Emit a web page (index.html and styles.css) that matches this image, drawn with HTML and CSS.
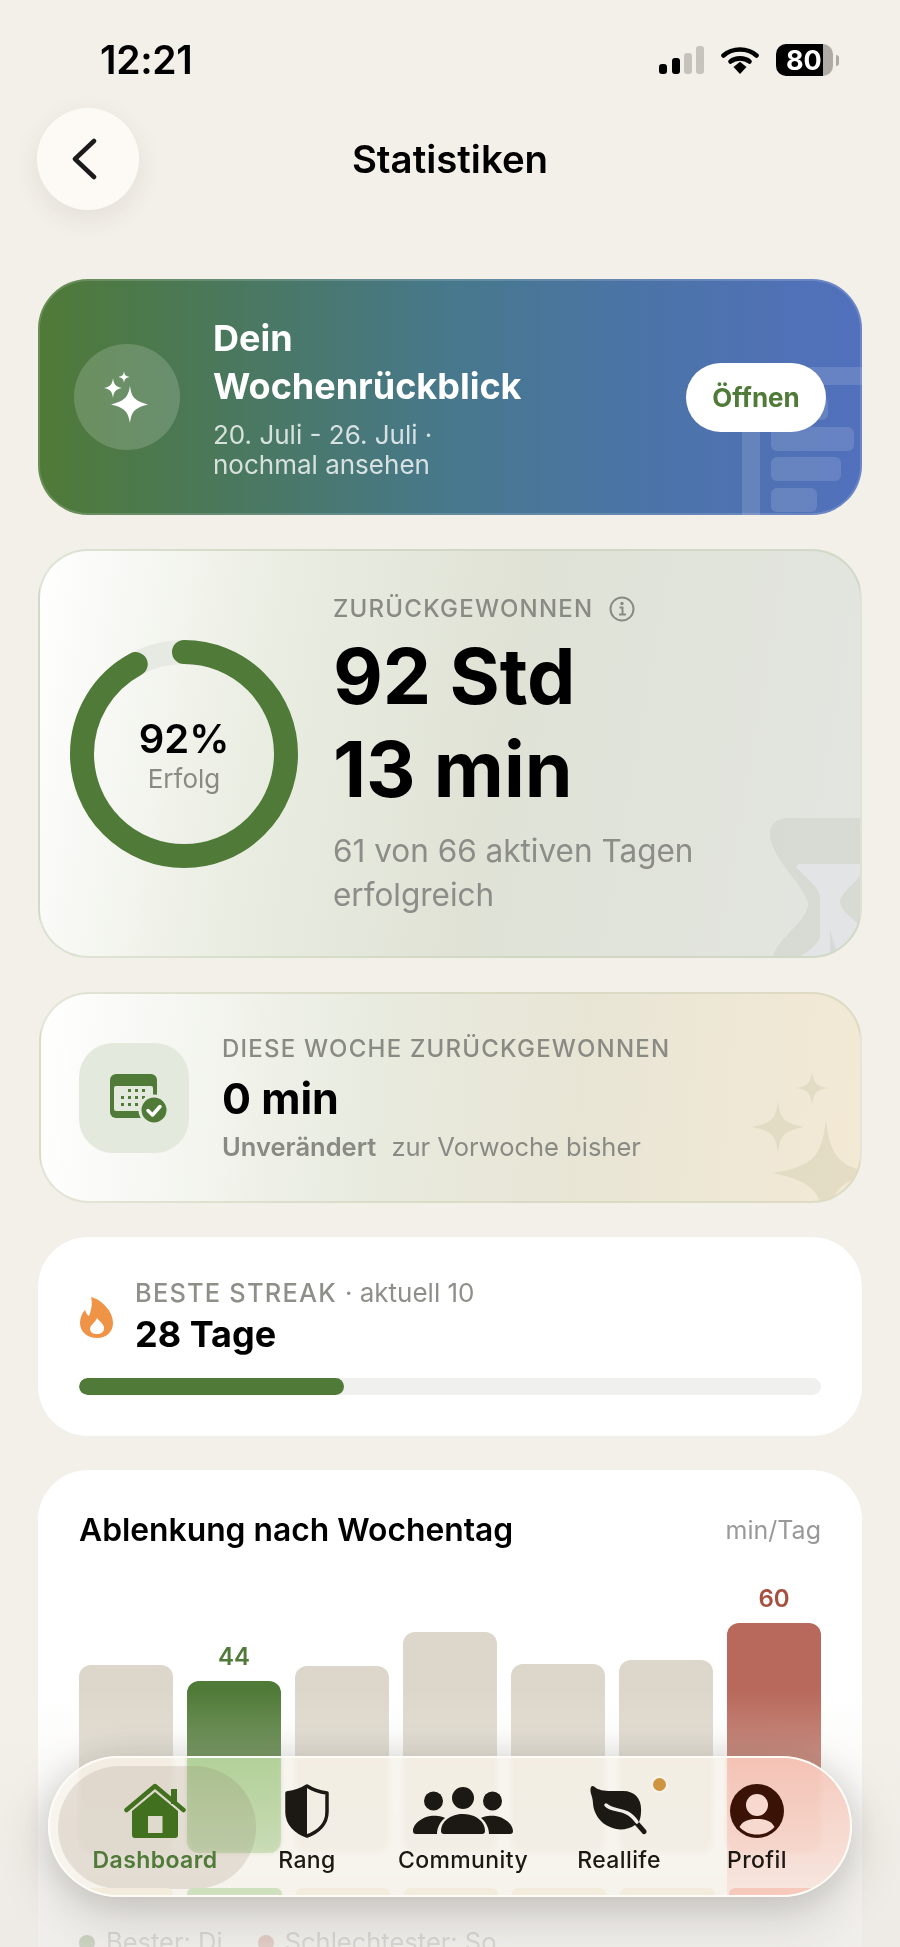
FILE: index.html
```html
<!DOCTYPE html>
<html lang="de">
<head>
    <meta charset="UTF-8">
    <meta name="viewport" content="width=device-width, initial-scale=1.0">
    <title>Statistiken</title>
    <link rel="stylesheet" href="styles.css">
</head>
<body>
  <div class="status-bar">
    <span class="time">12:21</span>
    <div class="status-icons">
      <svg class="signal" width="45" height="28" viewBox="0 0 45 28">
        <rect x="0" y="18" width="8" height="10" rx="3" fill="#000"/>
        <rect x="13" y="12" width="8" height="16" rx="3" fill="#000"/>
        <rect x="25" y="7" width="8" height="21" rx="3" fill="#c6c3bd"/>
        <rect x="37" y="0" width="8" height="28" rx="3" fill="#c6c3bd"/>
      </svg>
      <svg class="wifi" width="38" height="28" viewBox="0 0 38 28">
        <path d="M2.5 9.5C11.5 1.5 26.5 1.5 35.5 9.5" fill="none" stroke="#000" stroke-width="4.6" stroke-linecap="round"/>
        <path d="M9.5 15.5C14.5 11.3 23.5 11.3 28.5 15.5" fill="none" stroke="#000" stroke-width="4.6" stroke-linecap="round"/>
        <path d="M12.5 21L19 15.8L25.5 21L19 28z" fill="#000"/>
      </svg>
      <div class="battery">
        <div class="battery-body"><span class="battery-level">80</span></div>
        <div class="battery-nub"></div>
      </div>
    </div>
  </div>

  <header class="top-bar">
    <button class="back-btn" aria-label="Zurück">
      <svg width="28" height="42" viewBox="0 0 28 42"><path d="M24 3L5 21L24 39" fill="none" stroke="#1b1b1b" stroke-width="4.5" stroke-linecap="round" stroke-linejoin="round"/></svg>
    </button>
    <h1>Statistiken</h1>
  </header>

  <main class="cards">
    <section class="card review-card">
      <svg class="review-deco" width="120" height="148" viewBox="0 0 120 148">
        <g fill="#fff" fill-opacity=".13">
          <rect x="0" y="0" width="120" height="18" rx="2"/>
          <rect x="0" y="18" width="18" height="130"/>
          <rect x="29" y="30" width="57" height="23" rx="6"/>
          <rect x="29" y="60" width="83" height="24" rx="6"/>
          <rect x="29" y="90" width="70" height="24" rx="6"/>
          <rect x="29" y="121" width="46" height="24" rx="6"/>
        </g>
      </svg>
      <div class="review-icon">
        <svg width="62" height="62" viewBox="0 0 62 62">
          <path fill="#fff" d="M38 20C39.5 31 42 34.5 56 38.5C42 42 39.5 46 38 57C36 46 33.5 42 19 38.5C33.5 34.5 36 31 38 20z"/>
          <path fill="#fff" d="M21 12C22 19 23.5 20.5 30 22C23.5 23.5 22 25 21 32C20 25 18.5 23.5 12 22C18.5 20.5 20 19 21 12z"/>
          <path fill="#fff" d="M32 5C32.5 9 33.5 10 37.5 11C33.5 12 32.5 13 32 17C31.5 13 30.5 12 26.5 11C30.5 10 31.5 9 32 5z"/>
        </svg>
      </div>
      <div class="review-text">
        <h2>Dein<br>Wochenrückblick</h2>
        <p>20. Juli - 26. Juli ·<br>nochmal ansehen</p>
      </div>
      <button class="open-btn">Öffnen</button>
    </section>

    <section class="card saved-card">
      <svg class="hourglass-deco" width="90" height="138" viewBox="0 0 90 138">
        <path fill="#8b9a85" fill-opacity=".13" d="M18 0H90V138H3C10 118 34 106 38 88C40 74 6 46 0 20C-2 8 6 0 18 0z"/>
        <path fill="#e3e4e5" d="M30 46C27 46 26 48 27 50C36 60 48 68 50 78V120C46 128 38 133 31 138H90V108C82 100 70 92 70 84C70 76 84 66 90 58V46z"/>
        <path fill="#8b9a85" fill-opacity=".13" d="M60 112L68 138H60z"/>
      </svg>
      <div class="ring">
        <svg width="228" height="228" viewBox="0 0 228 228">
          <circle cx="114" cy="114" r="102" fill="none" stroke="#e7e9e3" stroke-width="24"/>
          <circle cx="114" cy="114" r="102" fill="none" stroke="#4f7a37" stroke-width="24" stroke-linecap="round" stroke-dasharray="589.6 640.9" transform="rotate(-90 114 114)"/>
        </svg>
        <div class="ring-text">
          <strong>92%</strong>
          <span>Erfolg</span>
        </div>
      </div>
      <div class="saved-text">
        <div class="label">ZURÜCKGEWONNEN
          <svg width="26" height="26" viewBox="0 0 26 26"><circle cx="13" cy="13" r="11.5" fill="none" stroke="#8a8a85" stroke-width="2"/><circle cx="13" cy="7.5" r="1.7" fill="#8a8a85"/><path d="M10.5 11.5H13.5V18.5M10 18.5H17" fill="none" stroke="#8a8a85" stroke-width="2"/></svg>
        </div>
        <div class="big-value">92 Std<br>13 min</div>
        <p class="saved-sub">61 von 66 aktiven Tagen<br>erfolgreich</p>
      </div>
    </section>

    <section class="card week-card">
      <svg class="stars-deco" width="120" height="130" viewBox="-30 0 120 130">
        <g fill="#9ea36f" fill-opacity=".17">
          <path d="M42 1C44 12 46 15 58 17C46 19 44 22 42 34C40 22 38 19 26 17C38 15 40 12 42 1z"/>
          <path d="M8 30C10 48 14 52 34 56C14 60 10 64 8 82C6 64 2 60 -18 56C2 52 6 48 8 30z"/>
          <path d="M56 49C60 84 68 96 104 102C68 110 60 122 56 157C52 122 44 110 2 102C44 96 52 84 56 49z"/>
        </g>
      </svg>
      <div class="week-icon">
        <svg width="62" height="56" viewBox="0 0 62 56">
          <rect x="0" y="0" width="47" height="44" rx="6" fill="#4f7a37"/>
          <rect x="4" y="12" width="39" height="25" rx="2" fill="#e3e9dc"/>
          <g fill="#4f7a37">
            <rect x="18" y="15" width="3" height="3"/><rect x="25" y="15" width="3" height="3"/><rect x="32" y="15" width="3" height="3"/>
            <rect x="11" y="22" width="3" height="3"/><rect x="18" y="22" width="3" height="3"/><rect x="25" y="22" width="3" height="3"/><rect x="32" y="22" width="3" height="3"/>
            <rect x="11" y="29" width="3" height="3"/><rect x="18" y="29" width="3" height="3"/><rect x="25" y="29" width="3" height="3"/>
          </g>
          <circle cx="44" cy="36" r="14" fill="#4f7a37" stroke="#e3e9dc" stroke-width="3"/>
          <path d="M38 36.5L42.5 41L50 32.5" fill="none" stroke="#fff" stroke-width="3.5" stroke-linecap="round" stroke-linejoin="round"/>
        </svg>
      </div>
      <div class="week-text">
        <div class="label">DIESE WOCHE ZURÜCKGEWONNEN</div>
        <div class="week-value">0 min</div>
        <p class="week-sub"><b>Unverändert</b> zur Vorwoche bisher</p>
      </div>
    </section>

    <section class="card streak-card">
      <div class="streak-top">
        <svg class="flame" width="33" height="41" viewBox="0 0 33 41">
          <path fill="#ef9346" fill-rule="evenodd" d="M11 0C20 2 33 13 33 26C33 35 26 41 17 41C8 41 0 35 0 26C0 21 2 16 5 13C6 16 7 18 9 19C11 14 13 7 11 0zM17 21C15 26 10 28 10 32C10 35 13 37 17 37C21 37 24 35 24 31C24 27 20 25 17 21z"/>
        </svg>
        <div>
          <div class="label streak-label">BESTE STREAK <span>· aktuell 10</span></div>
          <div class="streak-value">28 Tage</div>
        </div>
      </div>
      <div class="progress"><div class="progress-fill" style="width: 35.7%"></div></div>
    </section>

    <section class="card chart-card">
      <div class="chart-head">
        <h3>Ablenkung nach Wochentag</h3>
        <span>min/Tag</span>
      </div>
      <div class="chart">
        <div class="col"><div class="bar" style="height: 188px"></div></div>
        <div class="col"><b class="val best">44</b><div class="bar bar-best" style="height: 172px"></div></div>
        <div class="col"><div class="bar" style="height: 187px"></div></div>
        <div class="col"><div class="bar" style="height: 221px"></div></div>
        <div class="col"><div class="bar" style="height: 189px"></div></div>
        <div class="col"><div class="bar" style="height: 193px"></div></div>
        <div class="col"><b class="val worst">60</b><div class="bar bar-worst" style="height: 230px"></div></div>
      </div>
      <div class="legend">
        <span><i class="dot dot-best"></i>Bester: Di</span>
        <span><i class="dot dot-worst"></i>Schlechtester: So</span>
      </div>
    </section>
  </main>

  <div class="bottom-fade"></div>

  <nav class="tabbar">
    <div class="tab-tint-best"></div>
    <div class="tab-pill"></div>
    <div class="tab-tint"></div>
    <div class="tab-echo">
      <i></i><i class="echo-best"></i><i></i><i></i><i></i><i></i><i class="echo-worst"></i>
    </div>
    <a class="tab tab-home">
      <svg width="62" height="56" viewBox="0 0 62 56">
        <path fill="#41701f" fill-rule="evenodd" d="M31 9L54 28V52Q54 55 51 55H11Q8 55 8 52V28zM24 33V50H38.5V33z"/>
        <rect x="47" y="6" width="6" height="15" fill="#41701f"/>
        <path d="M2.5 27L31 3L59.5 27" fill="none" stroke="#41701f" stroke-width="4.5" stroke-linecap="round" stroke-linejoin="round"/>
      </svg>
      <span>Dashboard</span>
    </a>
    <a class="tab tab-rank">
      <svg width="44" height="54" viewBox="0 0 44 54">
        <path fill="#1c1814" d="M22 2C16 6 9 8 2 9V28C2 40 11 48 22 52z"/>
        <path d="M22 2C28 6 35 8 42 9V28C42 40 33 48 22 52C11 48 2 40 2 28V9C9 8 16 6 22 2z" fill="none" stroke="#1c1814" stroke-width="3.5" stroke-linejoin="round"/>
      </svg>
      <span>Rang</span>
    </a>
    <a class="tab tab-community">
      <svg width="100" height="50" viewBox="0 0 100 50">
        <g fill="#1c1814">
          <circle cx="50" cy="12" r="11"/>
          <circle cx="20.5" cy="15" r="9.5"/>
          <circle cx="79.5" cy="15" r="9.5"/>
          <path d="M28 45C28 35 38 28 50 28C62 28 72 35 72 45Q72 48 69 48H31Q28 48 28 45z"/>
          <path d="M75 30C88 28 100 37 100 45Q100 48 97 48H76C76 41 72 35 68 32C70 31 72 30 75 30z"/>
          <path d="M25 30C12 28 0 37 0 45Q0 48 3 48H24C24 41 28 35 32 32C30 31 28 30 25 30z"/>
        </g>
      </svg>
      <span>Community</span>
    </a>
    <a class="tab tab-reallife">
      <svg width="58" height="50" viewBox="0 0 58 50">
        <path fill="#1c1814" d="M1 1C2 -1 4 0 6 2C12 6 24 5 33 5C46 5 52 14 51 26C51 30 50 33 49 36L56 44C58 47 54 50 52 47L45 39C38 44 28 45 20 41C10 37 4 28 3 18C3 10 -1 6 1 1z"/>
        <path d="M16 19C24 27 36 20 47 36" fill="none" stroke="#f3eee7" stroke-width="3.5" stroke-linecap="round"/>
      </svg>
      <span>Reallife</span>
      <i class="tab-dot"></i>
    </a>
    <a class="tab tab-profile">
      <svg width="54" height="54" viewBox="0 0 54 54">
        <circle cx="27" cy="27" r="27" fill="#3a1206"/>
        <circle cx="27" cy="21" r="11" fill="#f7d9d0"/>
        <path d="M9.5 43C13 36 20 35 27 35C34 35 41 36 44.5 43C40 48 34 50.5 27 50.5C20 50.5 14 48 9.5 43z" fill="#f7d9d0"/>
      </svg>
      <span>Profil</span>
    </a>
  </nav>
</body>
</html>
```

FILE: styles.css
```css
* {
  box-sizing: border-box;
}

html, body {
  height: 100%;
  margin: 0;
  overflow: hidden;
}

body {
  position: relative;
  font-family: "Inter", "Liberation Sans", sans-serif;
  background: #f3efe9;
  color: #000;
}

h1, h2, h3, p {
  margin: 0;
}

.status-bar {
  height: 108px;
  display: flex;
  justify-content: space-between;
  align-items: flex-start;
  padding: 38px 61px 0 100px;
}

.time {
  font-size: 39px;
  line-height: 44px;
  font-weight: 600;
  letter-spacing: -.3px;
}

.status-icons {
  display: flex;
  align-items: center;
  gap: 17px;
  height: 44px;
}

.battery {
  display: flex;
  align-items: center;
  gap: 3px;
}

.battery-body {
  width: 57px;
  height: 32px;
  border-radius: 10px;
  background: linear-gradient(to right, #000 82%, #aeaba5 82%);
  display: flex;
  align-items: center;
  padding-left: 10px;
}

.battery-level {
  color: #fff;
  font-size: 27px;
  font-weight: 700;
}

.battery-nub {
  width: 3px;
  height: 11px;
  border-radius: 0 3px 3px 0;
  background: #aeaba5;
}

.top-bar {
  height: 171px;
  position: relative;
  padding-left: 37px;
}

.back-btn {
  width: 102px;
  height: 102px;
  border: none;
  border-radius: 50%;
  background: #fdfaf6;
  box-shadow: 0 8px 26px rgba(80, 70, 50, .09);
  display: flex;
  align-items: center;
  justify-content: center;
  padding: 0 8px 0 0;
}

.top-bar h1 {
  position: absolute;
  left: 0;
  right: 0;
  top: 28px;
  text-align: center;
  font-size: 38.4px;
  line-height: 46px;
  font-weight: 600;
}

.cards {
  display: flex;
  flex-direction: column;
  gap: 34px;
  padding: 0 38px;
}

.card {
  border-radius: 50px;
  position: relative;
  overflow: hidden;
  flex-shrink: 0;
}

.label {
  font-size: 24px;
  line-height: 30px;
  font-weight: 500;
  letter-spacing: 1.22px;
  color: #8a8a85;
}

/* wochenrueckblick */
.review-card {
  height: 236px;
  display: flex;
  align-items: center;
  padding: 0 36px;
  background: linear-gradient(90deg, #4f7a37 0%, #4a7860 25%, #47788c 50%, #4b74a6 72%, #5270bd 100%);
  box-shadow: 0 0 0 2px rgba(255, 255, 255, .15) inset;
}

.review-deco {
  position: absolute;
  left: 704px;
  top: 88px;
}

.review-icon {
  width: 106px;
  height: 106px;
  border-radius: 50%;
  background: rgba(255, 255, 255, .17);
  display: flex;
  align-items: center;
  justify-content: center;
  flex-shrink: 0;
  padding-right: 8px;
}

.review-text {
  margin-left: 33px;
  flex: 1;
  color: #fff;
}

.review-text h2 {
  font-size: 36px;
  line-height: 48px;
  font-weight: 700;
}

.review-text p {
  margin-top: 10px;
  font-size: 26px;
  line-height: 30px;
  color: rgba(255, 255, 255, .78);
}

.open-btn {
  position: relative;
  width: 140px;
  height: 69px;
  border: none;
  border-radius: 35px;
  background: #fff;
  color: #4f7a37;
  font-family: inherit;
  font-size: 26px;
  font-weight: 700;
}

/* zurueckgewonnen */
.saved-card {
  height: 409px;
  display: flex;
  align-items: center;
  padding-left: 30px;
  background: linear-gradient(100deg, #fff 0%, #e9ece0 30%, #dfe2d5 55%, #e3e5e1 100%);
  border: 2px solid rgba(195, 208, 180, .55);
}

.hourglass-deco {
  position: absolute;
  right: 0;
  bottom: 0;
}

.ring {
  position: relative;
  width: 228px;
  height: 228px;
  flex-shrink: 0;
}

.ring-text {
  position: absolute;
  inset: 0;
  display: flex;
  flex-direction: column;
  align-items: center;
  justify-content: center;
  padding-top: 2px;
}

.ring-text strong {
  font-size: 40px;
  line-height: 46px;
  font-weight: 600;
}

.ring-text span {
  margin-top: 2px;
  font-size: 26px;
  line-height: 30px;
  color: #8a8a85;
}

.saved-text {
  margin: 4px 0 0 35px;
  position: relative;
}

.saved-text .label {
  display: flex;
  align-items: center;
  gap: 16px;
}

.big-value {
  margin-top: 6px;
  font-size: 76.8px;
  line-height: 93px;
  font-weight: 700;
}

.saved-sub {
  margin-top: 13px;
  font-size: 31.5px;
  line-height: 44px;
  color: #8c8c88;
}

/* diese woche */
.week-card {
  height: 211px;
  margin-left: 1px;
  display: flex;
  align-items: center;
  padding-left: 38px;
  background: linear-gradient(95deg, #fff 0%, #e8ebdf 40%, #e8e5d5 65%, #f3e9d5 100%);
  border: 2px solid rgba(205, 208, 180, .55);
}

.stars-deco {
  position: absolute;
  right: 0;
  bottom: 0;
}

.week-icon {
  width: 110px;
  height: 110px;
  border-radius: 34px;
  background: #e3e9dc;
  display: flex;
  align-items: center;
  justify-content: center;
  flex-shrink: 0;
  padding: 8px 0 0 13px;
}

.week-text {
  margin-left: 33px;
  position: relative;
}

.week-value {
  margin-top: 9px;
  font-size: 43px;
  line-height: 50px;
  font-weight: 700;
}

.week-sub {
  margin-top: 9px;
  font-size: 25.5px;
  line-height: 30px;
  color: #8a8a85;
}

.week-sub b {
  font-weight: 600;
  margin-right: 8px;
}

/* streak */
.streak-card {
  height: 199px;
  background: #fff;
  padding: 41px 41px 0;
}

.streak-top {
  display: flex;
  align-items: center;
  gap: 22px;
}

.flame {
  margin-left: 1px;
}

.streak-label {
  color: #8f8f8a;
  font-size: 25.4px;
}

.streak-label span {
  font-size: 26px;
  font-weight: 400;
  letter-spacing: 0;
}

.streak-value {
  margin-top: 4px;
  font-size: 36px;
  line-height: 44px;
  font-weight: 700;
}

.progress {
  margin-top: 22px;
  height: 17px;
  border-radius: 9px;
  background: #f0f0ef;
  overflow: hidden;
}

.progress-fill {
  height: 100%;
  border-radius: 9px;
  background: #4f7a37;
}

/* chart */
.chart-card {
  height: 520px;
  background: #fff;
  padding: 39px 41px 0;
}

.chart-head {
  display: flex;
  justify-content: space-between;
  align-items: center;
}

.chart-head h3 {
  font-size: 31.8px;
  line-height: 42px;
  font-weight: 600;
}

.chart-head span {
  font-size: 25px;
  color: #999;
}

.chart {
  margin-top: 29px;
  display: grid;
  grid-template-columns: repeat(7, 1fr);
  column-gap: 14px;
}

.col {
  height: 273px;
  display: flex;
  flex-direction: column;
  justify-content: flex-end;
  align-items: stretch;
  text-align: center;
}

.bar {
  border-radius: 12px;
  background: #ddd7cb;
}

.bar-best {
  background: #4f7a37;
}

.bar-worst {
  background: #b8695b;
}

.val {
  font-size: 24px;
  line-height: 30px;
  font-weight: 600;
  margin-bottom: 9px;
}

.best {
  color: #4f7a37;
}

.worst {
  color: #a8503f;
}

.legend {
  margin-top: 74px;
  display: flex;
  gap: 35px;
  font-size: 25.5px;
  line-height: 30px;
  color: #8a8a85;
}

.dot {
  display: inline-block;
  width: 16px;
  height: 16px;
  border-radius: 50%;
  margin-right: 11px;
}

.dot-best {
  background: #4f7a37;
}

.dot-worst {
  background: #b5604f;
}

/* verblassen unten */
.bottom-fade {
  position: absolute;
  left: 0;
  right: 0;
  top: 1690px;
  bottom: 0;
  background: linear-gradient(to bottom, rgba(240, 238, 233, 0) 0%, rgba(240, 238, 233, .28) 27%, rgba(236, 234, 229, .8) 100%);
}

/* tabbar */
.tabbar {
  position: absolute;
  left: 48px;
  top: 1756px;
  width: 804px;
  height: 141px;
  border-radius: 71px;
  overflow: hidden;
  display: flex;
  padding-left: 35px;
  background: rgba(247, 243, 236, .74);
  border: 2px solid rgba(255, 253, 248, .95);
  box-shadow: 0 18px 50px rgba(60, 55, 45, .22), 0 0 34px rgba(60, 55, 45, .1);
  -webkit-backdrop-filter: blur(2px) saturate(1.8);
  backdrop-filter: blur(2px) saturate(1.8);
}

.tab-tint-best {
  position: absolute;
  left: 137px;
  top: 0;
  width: 94px;
  height: 95px;
  border-radius: 0 0 12px 12px;
  background: linear-gradient(to bottom, rgba(168, 204, 140, .75), rgba(180, 210, 155, .5));
}

.tab-pill {
  position: absolute;
  left: 8px;
  top: 8px;
  width: 198px;
  height: 123px;
  border-radius: 62px;
  background: rgba(130, 115, 90, .17);
}

.tab-tint {
  position: absolute;
  left: 677px;
  right: 0;
  top: 0;
  bottom: 0;
  background: linear-gradient(to bottom, rgba(244, 190, 176, .8), rgba(247, 222, 214, .6));
}

.tab-echo {
  position: absolute;
  left: 29px;
  top: 130px;
  width: 744px;
  height: 10px;
  display: grid;
  grid-template-columns: repeat(7, 1fr);
  column-gap: 14px;
}

.tab-echo i {
  border-radius: 6px 6px 0 0;
  background: #f3ecdd;
}

.tab-echo .echo-best {
  background: #cfe0bf;
}

.tab-echo .echo-worst {
  background: #f7c9bd;
}

.tab {
  position: relative;
  display: flex;
  flex-direction: column;
  align-items: center;
  height: 100%;
  padding-top: 25px;
  color: #1c1814;
  font-size: 23px;
  font-weight: 500;
  letter-spacing: .4px;
}

.tab-home {
  width: 140px;
  color: #4f7a37;
  font-weight: 600;
}

.tab-rank {
  width: 164px;
}

.tab-community {
  width: 148px;
}

.tab-reallife {
  width: 164px;
}

.tab-profile {
  width: 112px;
}

.tab svg {
  height: 56px;
  flex-shrink: 0;
}

.tab span {
  margin-top: 6px;
  line-height: 30px;
  white-space: nowrap;
}

.tab-dot {
  position: absolute;
  left: 114px;
  top: 18px;
  width: 17px;
  height: 17px;
  border-radius: 50%;
  background: #cf943f;
  border: 2px solid #f8f4ed;
}
```
